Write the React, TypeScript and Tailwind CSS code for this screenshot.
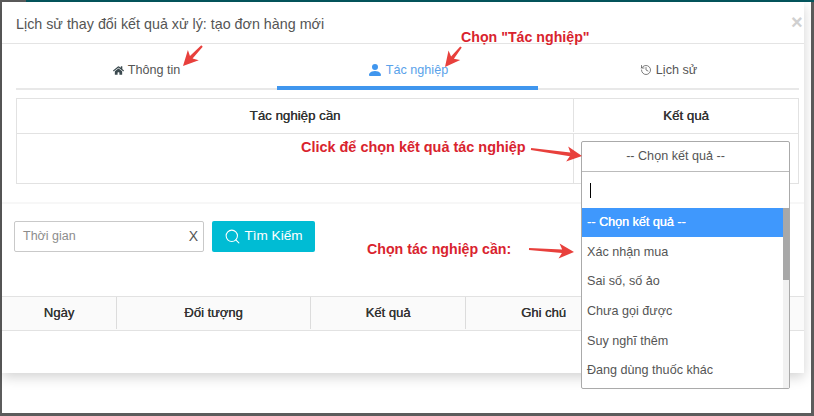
import { Search, History } from "lucide-react";
import { FaHome } from "react-icons/fa";
import { BsPersonFill } from "react-icons/bs";

const options = [
  "Xác nhận mua",
  "Sai số, số ảo",
  "Chưa gọi được",
  "Suy nghĩ thêm",
  "Đang dùng thuốc khác",
];

const arrows = [
  { x1: 202, y1: 46, x2: 183, y2: 66 },
  { x1: 461, y1: 47, x2: 445, y2: 67 },
  { x1: 531, y1: 149, x2: 582, y2: 156 },
  { x1: 529, y1: 249, x2: 574, y2: 252 },
];

function arrowPoints(a: { x1: number; y1: number; x2: number; y2: number }) {
  const dx = a.x2 - a.x1;
  const dy = a.y2 - a.y1;
  const len = Math.sqrt(dx * dx + dy * dy);
  const ux = dx / len;
  const uy = dy / len;
  const at = (along: number, side: number) =>
    `${a.x1 + ux * along - uy * side},${a.y1 + uy * along + ux * side}`;
  const head = len - 15;
  return [
    at(0, -1),
    at(head + 3, -1.8),
    at(head, -7.5),
    at(len, 0),
    at(head, 7.5),
    at(head + 3, 1.8),
    at(0, 1),
  ].join(" ");
}

export default function App() {
  return (
    <div className="relative flex h-[416px] w-[814px] flex-col overflow-hidden bg-[#5c5c5c] pr-[3px] pb-[3px] pl-[2px] font-['Liberation_Sans',Arial,sans-serif]">
      <div className="-mr-[3px] ml-[24px] h-[2px] shrink-0 bg-[#04565e]" />
      <div className="flex-1 bg-white">
        <div className="h-[371px] w-[802px] bg-white shadow-[0_4px_12px_rgba(0,0,0,0.18)]">
          {/* Header */}
          <div className="h-[42px] border-b border-[#e4e4e4] pt-[14px] pl-[14px] text-[14.3px] leading-[16px] text-[#555]">
            Lịch sử thay đổi kết quả xử lý: tạo đơn hàng mới
          </div>

          {/* Tabs */}
          <div className="mr-[5px] ml-[14px] flex h-[46px] border-b-2 border-[#e8e8e8] text-[12.6px] text-[#555]">
            <div className="-mb-[2px] flex flex-1 items-center justify-center gap-[4px] pt-[6px]">
              <FaHome className="h-[11px] w-[11px] text-[#3b4a4f]" />
              <span>Thông tin</span>
            </div>
            <div className="-mb-[2px] flex flex-1 items-center justify-center gap-[3px] border-b-4 border-[#4096ee] pt-[10px] text-[#5aa2ea]">
              <BsPersonFill className="h-[16px] w-[16px] text-[#4096ee]" />
              <span>Tác nghiệp</span>
            </div>
            <div className="-mb-[2px] flex flex-1 items-center justify-center gap-[4px] pt-[6px]">
              <History className="h-[12px] w-[12px]" strokeWidth={1.5} />
              <span>Lịch sử</span>
            </div>
          </div>

          {/* Action table */}
          <div className="mt-[8px] mr-[5px] ml-[14px] h-[86px] border border-[#e2e2e2] text-[13.3px] font-medium text-[#333]">
            <div className="flex h-[35px] border-b border-[#e2e2e2] pb-[1px]">
              <div className="flex flex-1 items-center justify-center border-r border-[#e2e2e2] [text-shadow:0.3px_0_0_#333]">
                Tác nghiệp cần
              </div>
              <div className="flex w-[224px] items-center justify-center [text-shadow:0.3px_0_0_#333]">
                Kết quả
              </div>
            </div>
            <div className="flex h-[49px]">
              <div className="flex-1 border-r border-[#e2e2e2]" />
              <div className="w-[224px]" />
            </div>
          </div>

          <div className="mt-[18px] h-[2px] bg-[#f7f7f7]" />

          {/* Search */}
          <div className="mt-[17px] flex gap-[8px] pl-[12px]">
            <div className="flex h-[31px] w-[190px] items-center justify-between rounded-[2px] border border-[#c9c9c9] pr-[5px] pb-[1px] pl-[8px] text-[12.5px] text-[#8c8c8c]">
              <span>Thời gian</span>
              <span className="text-[14px] text-[#555]">X</span>
            </div>
            <button className="flex h-[31px] w-[103px] items-center justify-center gap-[3px] rounded-[2px] bg-[#00bcd4] pb-[1px] text-[13.6px] text-white">
              <Search className="h-[17px] w-[17px]" strokeWidth={1.5} />
              Tìm Kiếm
            </button>
          </div>

          {/* History table */}
          <div className="mt-[44px] flex h-[35px] border-y border-[#e2e2e2] bg-[#fafafa] pb-[1px] text-[13px] font-medium text-[#333]">
            <div className="flex w-[115px] items-center justify-center border-r border-[#dcdcdc] [text-shadow:0.3px_0_0_#333]">Ngày</div>
            <div className="flex w-[194px] items-center justify-center border-r border-[#dcdcdc] [text-shadow:0.3px_0_0_#333]">Đối tượng</div>
            <div className="flex w-[155px] items-center justify-center border-r border-[#dcdcdc] [text-shadow:0.3px_0_0_#333]">Kết quả</div>
            <div className="flex w-[155px] items-center justify-center [text-shadow:0.3px_0_0_#333]">Ghi chú</div>
          </div>
        </div>
      </div>

      {/* Open select */}
      <div className="absolute top-[141px] left-[581px] w-[209px] rounded-[2px] border border-[#aaa] bg-white text-[12.6px] text-[#555]">
        <div className="flex h-[30px] items-center justify-center border-b border-[#bbb] pr-[20px] pb-[1px]">
          -- Chọn kết quả --
        </div>
        <div className="flex h-[36px] items-center pl-[8px]">
          <div className="h-[15px] w-px bg-black" />
        </div>
        <div className="flex h-[180px]">
          <div className="flex-1">
            <div className="flex h-[29.4px] items-center bg-[#3f98fd] pl-[5px] text-white [text-shadow:0.3px_0_0_#fff]">
              -- Chọn kết quả --
            </div>
            {options.map((o) => (
              <div key={o} className="flex h-[29.6px] items-center pl-[5px]">
                {o}
              </div>
            ))}
          </div>
          <div className="w-[6px] bg-[#f1f1f1]">
            <div className="h-[72px] bg-[#a8a8a8]" />
          </div>
        </div>
      </div>

      {/* Close button */}
      <div className="absolute top-[12px] left-[791px] text-[20px] leading-[20px] font-bold text-[#d0d0d0]">×</div>

      {/* Annotations */}
      <div className="absolute top-[29px] left-[461px] text-[14.2px] leading-[16px] font-bold whitespace-nowrap text-[#d9232e]">Chọn "Tác nghiệp"</div>
      <div className="absolute top-[139px] left-[301px] text-[14.45px] leading-[16px] font-bold whitespace-nowrap text-[#d9232e]">Click để chọn kết quả tác nghiệp</div>
      <div className="absolute top-[241px] left-[367px] text-[14.2px] leading-[16px] font-bold whitespace-nowrap text-[#d9232e]">Chọn tác nghiệp cần:</div>
      <svg className="pointer-events-none absolute top-0 left-0 h-[416px] w-[814px]" viewBox="0 0 814 416">
        {arrows.map((a) => (
          <polygon key={a.x1} points={arrowPoints(a)} fill="#e8403c" />
        ))}
      </svg>
    </div>
  );
}
